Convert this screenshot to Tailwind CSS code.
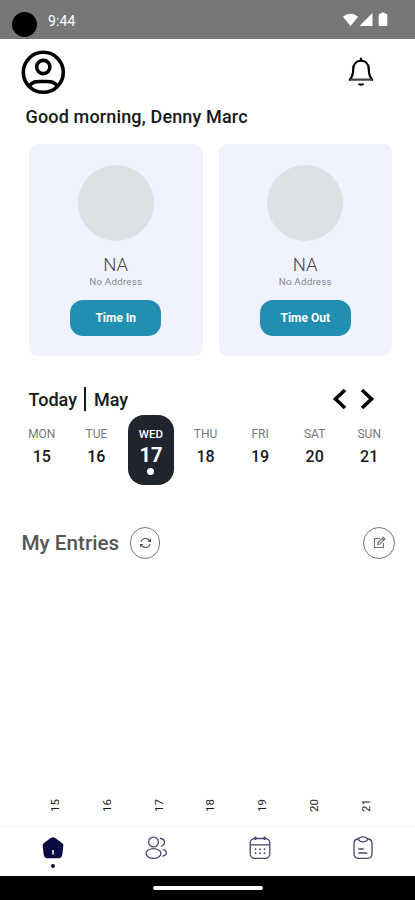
<!DOCTYPE html>
<html lang="en">
<head>
<meta charset="utf-8">
<meta name="viewport" content="width=device-width, initial-scale=1">
<title>Home</title>
<script src="https://cdn.jsdelivr.net/npm/@tailwindcss/browser@4"></script>
</head>
<body class="bg-white font-['Roboto','Liberation_Sans',sans-serif] text-[#17181a]">
<div class="flex h-[900px] w-[415px] flex-col overflow-hidden bg-white">

  <!-- Status bar -->
  <div class="flex h-[39px] shrink-0 items-center bg-[#777777] pl-3 pr-[26px]">
    <div class="mt-[9px] size-[25px] rounded-full bg-black"></div>
    <span class="ml-[11px] mt-[2px] text-[14px] leading-4 tracking-[0.1px] text-white">9:44</span>
    <svg class="ml-auto mt-[1px]" width="46" height="16" viewBox="0 0 46 16" fill="#fff">
      <path d="M0 4.700C4.500 .8 10.500 .8 15 4.700L7.500 14Z"/>
      <path d="M29.500 1v13H16.500Z"/>
      <path d="M38.300 .5h3.400V1.800H43Q44.300 1.800 44.300 3V13Q44.300 14 43.300 14H36.700Q35.700 14 35.700 13V3Q35.700 1.800 37 1.800H38.300Z"/>
    </svg>
  </div>

  <!-- Header -->
  <div class="flex h-[66px] shrink-0 items-center justify-between pl-[21px] pr-[41px]">
    <svg width="45" height="45" viewBox="0 0 45 45" fill="none" stroke="#000" stroke-width="3.600">
      <circle cx="22.300" cy="22.300" r="20"/>
      <circle cx="22.300" cy="17" r="6.600"/>
      <path d="M8.300 36C12 30.500 16.500 31.500 22.300 31.500S32.600 30.500 36.300 36"/>
    </svg>
    <svg width="26" height="30" viewBox="0 0 26 30" fill="none" stroke="#000" stroke-width="2.200" stroke-linejoin="round" stroke-linecap="round">
      <path d="M1.800 22.800C4.200 20 5.200 18 5.200 12.500C5.200 7.500 8 4 13 3.500C18 4 20.800 7.500 20.800 12.500C20.800 18 21.800 20 24.200 22.800"/>
      <path d="M3 22.600H23" stroke="#444"/>
      <path d="M13 1.500v2"/>
      <path d="M9.800 26.500h6.400c-.5 3-5.900 3-6.400 0Z" fill="#000" stroke="none"/>
    </svg>
  </div>
  <h1 class="h-[39px] shrink-0 pl-[25.500px] text-[18px] leading-6 font-medium tracking-[0.150px]">Good morning, Denny Marc</h1>

  <!-- Clock cards -->
  <div class="flex h-[212px] shrink-0 gap-4 pl-[29px] pr-[23px]">
    <div class="flex flex-1 flex-col items-center rounded-[9px] bg-[#f0f3ff] pt-[21px]">
      <div class="size-[76px] rounded-full bg-[#dde1e4]"></div>
      <span class="mt-[14px] text-[18.500px] leading-[20px] font-light text-[#45464c]">NA</span>
      <span class="mt-[1px] text-[9.800px] leading-3 tracking-[0.200px] text-[#85868d]">No Address</span>
      <button class="mt-[12px] h-[36px] w-[91px] rounded-[13px] bg-[#218fb1] text-[12px] font-bold text-white">Time In</button>
    </div>
    <div class="flex flex-1 flex-col items-center rounded-[9px] bg-[#f0f3ff] pt-[21px]">
      <div class="size-[76px] rounded-full bg-[#dde1e4]"></div>
      <span class="mt-[14px] text-[18.500px] leading-[20px] font-light text-[#45464c]">NA</span>
      <span class="mt-[1px] text-[9.800px] leading-3 tracking-[0.200px] text-[#85868d]">No Address</span>
      <button class="mt-[12px] h-[36px] w-[91px] rounded-[13px] bg-[#218fb1] text-[12px] font-bold text-white">Time Out</button>
    </div>
  </div>

  <!-- Week picker -->
  <div class="mt-[30px] flex h-[26px] shrink-0 items-center pl-[28.500px] pr-[40px] text-[18px] font-medium">
    <span>Today</span>
    <div class="ml-[7px] mr-[8px] h-[24px] w-[2px] bg-[#17181a]"></div>
    <span>May</span>
    <svg class="ml-auto" width="43" height="22" viewBox="0 0 43 22" fill="none" stroke="#000" stroke-width="3.600">
      <path d="M13 2L3.500 11L13 20M30 2L39.500 11L30 20"/>
    </svg>
  </div>
  <div class="mt-[3px] grid h-[70px] w-[382px] shrink-0 grid-cols-7 justify-items-center self-start ml-[14.500px] text-center text-[16px] leading-5 font-medium">
    <div class="pt-[11px]"><div class="text-[12px] leading-4 font-normal text-[#777]">MON</div><div class="mt-[5px]">15</div></div>
    <div class="pt-[11px]"><div class="text-[12px] leading-4 font-normal text-[#777]">TUE</div><div class="mt-[5px]">16</div></div>
    <div class="flex h-[70px] w-[46px] flex-col items-center rounded-[16px] bg-[#20242c] pt-[11px] text-white">
      <div class="text-[11.500px] leading-4">WED</div>
      <div class="mt-[2px] text-[20px] leading-[22px] font-bold">17</div>
      <div class="mt-[2px] size-[7px] rounded-full bg-white"></div>
    </div>
    <div class="pt-[11px]"><div class="text-[12px] leading-4 font-normal text-[#777]">THU</div><div class="mt-[5px]">18</div></div>
    <div class="pt-[11px]"><div class="text-[12px] leading-4 font-normal text-[#777]">FRI</div><div class="mt-[5px]">19</div></div>
    <div class="pt-[11px]"><div class="text-[12px] leading-4 font-normal text-[#777]">SAT</div><div class="mt-[5px]">20</div></div>
    <div class="pt-[11px]"><div class="text-[12px] leading-4 font-normal text-[#777]">SUN</div><div class="mt-[5px]">21</div></div>
  </div>

  <!-- Entries -->
  <div class="mt-[41px] flex h-[33px] shrink-0 items-center pl-[21.500px] pr-[20px]">
    <h2 class="w-[108.500px] pt-[1px] text-[20.700px] leading-6 font-medium whitespace-nowrap text-[#555]">My Entries</h2>
    <button aria-label="Refresh" class="flex h-[32px] w-[30px] items-center justify-center rounded-full border border-[#777]">
      <svg width="13" height="12" viewBox="0 0 13 12" fill="none" stroke="#555" stroke-width="1.200">
        <path d="M2 5C2.500 2.500 4.500 1.500 6.500 1.500C8.500 1.500 10 2.500 11 4.500M11 7C10.500 9.500 8.500 10.500 6.500 10.500C4.500 10.500 3 9.500 2 7.500"/>
        <path d="M12 1.500v3.500H8.500ZM1 10.500V7h3.500Z" fill="#555" stroke="none"/>
      </svg>
    </button>
    <button aria-label="Edit" class="ml-auto flex size-[32px] items-center justify-center rounded-full border border-[#777]">
      <svg width="13" height="13" viewBox="0 0 13 13" fill="none" stroke="#707070" stroke-width="1.100">
        <path d="M7 2.500H1.500V11.500H10.500V7"/>
        <path d="M4.800 8.500L5.300 6.300L10.300 1.300L12 3L7 8ZM9 2.600L10.700 4.300"/>
      </svg>
    </button>
  </div>

  <!-- Chart axis -->
  <div class="mt-auto grid h-[30px] w-[363px] shrink-0 grid-cols-7 justify-items-center ml-[29px] text-[11.500px] leading-[14px]">
    <span class="h-[16px] rotate-180 [writing-mode:vertical-rl]">15</span>
    <span class="h-[16px] rotate-180 [writing-mode:vertical-rl]">16</span>
    <span class="h-[16px] rotate-180 [writing-mode:vertical-rl]">17</span>
    <span class="h-[16px] rotate-180 [writing-mode:vertical-rl]">18</span>
    <span class="h-[16px] rotate-180 [writing-mode:vertical-rl]">19</span>
    <span class="h-[16px] rotate-180 [writing-mode:vertical-rl]">20</span>
    <span class="h-[16px] rotate-180 [writing-mode:vertical-rl]">21</span>
  </div>

  <!-- Bottom navigation -->
  <nav class="grid h-[50px] shrink-0 grid-cols-4 justify-items-center border-t border-[#f0f0f0] pt-[9px] pl-[1px]">
    <div class="flex flex-col items-center">
      <svg width="22" height="23" viewBox="0 0 22 23">
        <path d="M9 1.800Q11 .6 13 1.800L20 7Q21.800 8.300 21.300 10.300L20.300 18.500Q19.800 22.200 17 22.200H5Q2.200 22.200 1.700 18.500L.7 10.300Q.2 8.300 2 7Z" fill="#0b0b43"/>
        <path d="M11 14v4.500" stroke="#fff" stroke-width="1.500"/>
      </svg>
      <div class="mt-[5px] size-[4px] rounded-full bg-[#0b0b43]"></div>
    </div>
    <svg width="24" height="24" viewBox="0 0 24 24" fill="none" stroke="#47476f" stroke-width="1.300" stroke-linecap="round">
      <circle cx="9.500" cy="6" r="4.900"/>
      <ellipse cx="9.500" cy="17.500" rx="7.400" ry="4.900"/>
      <path d="M16.500 2.500C21 2.500 22 8.500 17.500 10.200M19.500 13.700C23.500 15 23.500 19 19 20"/>
    </svg>
    <svg width="22" height="24" viewBox="0 0 22 24" fill="none" stroke="#47476f" stroke-width="1.300" stroke-linecap="round">
      <rect x="1.200" y="2.500" width="19.600" height="19.800" rx="4.500"/>
      <path d="M1.500 8.800h19"/>
      <path d="M6.500 1.500v1.500M15.500 1.500v1.500" stroke-width="2.200"/>
      <path d="M6.500 13.200h.1M11 13.200h.1M15.500 13.200h.1M6.500 17.200h.1M11 17.200h.1M15.500 17.200h.1" stroke-width="1.700"/>
    </svg>
    <svg width="20" height="24" viewBox="0 0 20 24" fill="none" stroke="#47476f" stroke-width="1.300" stroke-linecap="round">
      <path d="M5.500 3H4.500Q1 3.500 1 7.500V17.500Q1 22.300 5.500 22.300H14.500Q19 22.300 19 17.500V7.500Q19 3.500 15.500 3H14.500"/>
      <path d="M5.200 3.200Q6.500 .8 10 .8T14.800 3.200Q13.500 5.800 10 5.800T5.200 3.200Z"/>
      <path d="M5.800 13h4.500M5.800 17h8"/>
    </svg>
  </nav>
  <div class="flex h-[24px] shrink-0 justify-center bg-black pt-[10px]">
    <div class="h-[4px] w-[110px] rounded-full bg-white"></div>
  </div>
</div>
</body>
</html>
